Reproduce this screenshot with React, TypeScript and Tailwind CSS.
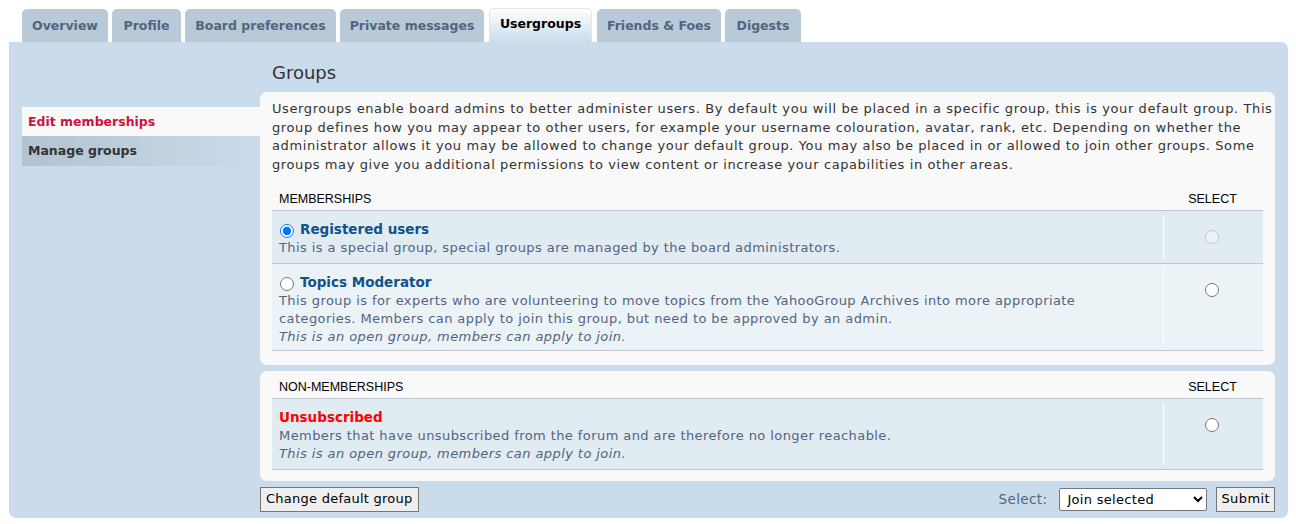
import { useState } from 'react'

const TABS: { label: string; w: string }[] = [
  { label: 'Overview', w: 'w-[86px]' },
  { label: 'Profile', w: 'w-[69px]' },
  { label: 'Board preferences', w: 'w-[151px]' },
  { label: 'Private messages', w: 'w-[144px]' },
  { label: 'Usergroups', w: 'w-[103px]' },
  { label: 'Friends & Foes', w: 'w-[124px]' },
  { label: 'Digests', w: 'w-[76px]' },
]

type Grupo = {
  id: string
  nombre: string
  color: string
  desc: string[]
  abierto?: boolean
  radioIzq?: boolean
  deshabilitado?: boolean
}

const MIEMBRO: Grupo[] = [
  {
    id: 'registered',
    nombre: 'Registered users',
    color: 'text-[#105289]',
    desc: ['This is a special group, special groups are managed by the board administrators.'],
    radioIzq: true,
    deshabilitado: true,
  },
  {
    id: 'topics',
    nombre: 'Topics Moderator',
    color: 'text-[#105289]',
    desc: [
      'This group is for experts who are volunteering to move topics from the YahooGroup Archives into more appropriate',
      'categories. Members can apply to join this group, but need to be approved by an admin.',
    ],
    abierto: true,
    radioIzq: true,
  },
]

const NO_MIEMBRO: Grupo[] = [
  {
    id: 'unsub',
    nombre: 'Unsubscribed',
    color: 'text-[#ff0000]',
    desc: ['Members that have unsubscribed from the forum and are therefore no longer reachable.'],
    abierto: true,
  },
]

function Tabla({
  titulo,
  grupos,
  filaPb,
  defecto,
  setDefecto,
  seleccion,
  setSeleccion,
}: {
  titulo: string
  grupos: Grupo[]
  filaPb: string
  defecto: string
  setDefecto: (v: string) => void
  seleccion: string
  setSeleccion: (v: string) => void
}) {
  return (
    <div>
      <div className="flex items-end h-[22px] border-b border-[#bcc8d4] font-['Liberation_Sans',Arial,sans-serif] text-[12.5px] text-black pb-[2px]">
        <div className="flex-1 pl-[7px]">{titulo}</div>
        <div className="w-[100px] text-center pr-[1px]">SELECT</div>
      </div>
      {grupos.map((g, i) => (
        <div
          key={g.id}
          className={`flex min-h-[53px] border-b border-[#bcc8d4] ${i % 2 === 0 ? 'bg-[#e1ebf2]' : 'bg-[#ecf3f7]'}`}
        >
          <div className={`flex-1 pl-[7px] pt-[9px] ${filaPb} tracking-[0.42px]`}>
            <div className="flex items-center h-[19px] tracking-normal">
              {g.radioIzq && (
                <input
                  type="radio"
                  name="defecto"
                  checked={defecto === g.id}
                  onChange={() => setDefecto(g.id)}
                  className="m-0 mr-[6px] ml-[1px] w-[14px] h-[14px] mt-[3px]"
                />
              )}
              <span className={`font-bold text-[13.5px] ${g.color}`}>{g.nombre}</span>
            </div>
            {g.desc.map((l) => (
              <div key={l} className="text-[#536482] leading-[18px]">
                {l}
              </div>
            ))}
            {g.abierto && (
              <div className="italic text-[#536482] leading-[17px]">This is an open group, members can apply to join.</div>
            )}
          </div>
          <div className="w-[100px] border-l border-white my-[4px] flex justify-center pt-[15px] pr-[3px]">
            <input
              type="radio"
              name="seleccion"
              disabled={g.deshabilitado}
              checked={seleccion === g.id}
              onChange={() => setSeleccion(g.id)}
              className="m-0 w-[14px] h-[14px]"
            />
          </div>
        </div>
      ))}
    </div>
  )
}

export default function App() {
  const [defecto, setDefecto] = useState('registered')
  const [seleccion, setSeleccion] = useState('')

  return (
    <div className="min-h-[524px] bg-white font-['DejaVu_Sans',Verdana,sans-serif] text-[13px] leading-[18.5px] text-[#333]">
      <div className="px-[9px] pt-[8px]">
        <div className="flex items-end gap-[4px] pl-[13px] h-[34px]">
          {TABS.map((t) =>
            t.label === 'Usergroups' ? (
              <div
                key={t.label}
                className={`${t.w} h-[34px] pt-[6px] mx-[1px] text-center rounded-t-[5px] border border-b-0 border-[#dde7f0] bg-gradient-to-b from-white to-[#cadceb] font-bold text-[12.5px] text-black`}
              >
                {t.label}
              </div>
            ) : (
              <div
                key={t.label}
                className={`${t.w} h-[33px] pt-[8px] text-center rounded-t-[5px] bg-[#b8c9d8] font-bold text-[12.5px] text-[#536482]`}
              >
                {t.label}
              </div>
            ),
          )}
        </div>

        <div className="bg-[#cadceb] rounded-[7px] rounded-tl-none mr-[-1px] px-[13px] pt-[20px] pb-[6px] flex">
          <div className="w-[238px] pt-[45px]">
            <div className="h-[29px] bg-[#f9f9f9] pl-[6px] pt-[6px] font-bold text-[12.5px] text-[#d31141]">Edit memberships</div>
            <div className="h-[30px] bg-gradient-to-r from-[#b2c2d1] to-[#cadceb] pl-[6px] pt-[6px] font-bold text-[12.5px] text-[#333]">
              Manage groups
            </div>
          </div>

          <div className="flex-1">
            <h2 className="text-[18px] leading-[22px] pl-[12px] h-[30px] text-[#333] font-normal">Groups</h2>

            <div className="bg-[#f9f9f9] rounded-[7px] px-[12px] pt-[8px] pb-[14px]">
              <p className="mb-[15px] mr-[-13px] tracking-[0.6px]">
                Usergroups enable board admins to better administer users. By default you will be placed in a specific group, this is
                your default group. This group defines how you may appear to other users, for example your username colouration, avatar,
                rank, etc. Depending on whether the administrator allows it you may be allowed to change your default group. You may also
                be placed in or allowed to join other groups. Some groups may give you additional permissions to view content or increase
                your capabilities in other areas.
              </p>
              <Tabla
                titulo="MEMBERSHIPS"
                grupos={MIEMBRO}
                filaPb="pb-[5px]"
                defecto={defecto}
                setDefecto={setDefecto}
                seleccion={seleccion}
                setSeleccion={setSeleccion}
              />
            </div>

            <div className="bg-[#f9f9f9] rounded-[7px] px-[12px] pt-[6px] pb-[11px] mt-[6px]">
              <Tabla
                titulo="NON-MEMBERSHIPS"
                grupos={NO_MIEMBRO}
                filaPb="pb-[7px]"
                defecto={defecto}
                setDefecto={setDefecto}
                seleccion={seleccion}
                setSeleccion={setSeleccion}
              />
            </div>

            <div className="flex items-center justify-between mt-[6px]">
              <button className="h-[25px] px-[5px] border border-[#767676] bg-[#efefef] text-black text-[13px] tracking-[0.25px]">
                Change default group
              </button>
              <div className="flex items-center">
                <span className="text-[#536482] text-[13.5px] tracking-[0.4px] mr-[12px]">Select:</span>
                <select className="h-[23px] w-[148px] border border-[#767676] rounded-[2px] bg-white text-black text-[13px] tracking-[0.3px] pl-[3px]">
                  <option>Join selected</option>
                  <option>Resign selected</option>
                </select>
                <button className="h-[25px] ml-[9px] px-[4px] border border-[#767676] bg-[#efefef] text-black text-[13px] tracking-[0.4px]">
                  Submit
                </button>
              </div>
            </div>
          </div>
        </div>
      </div>
    </div>
  )
}
